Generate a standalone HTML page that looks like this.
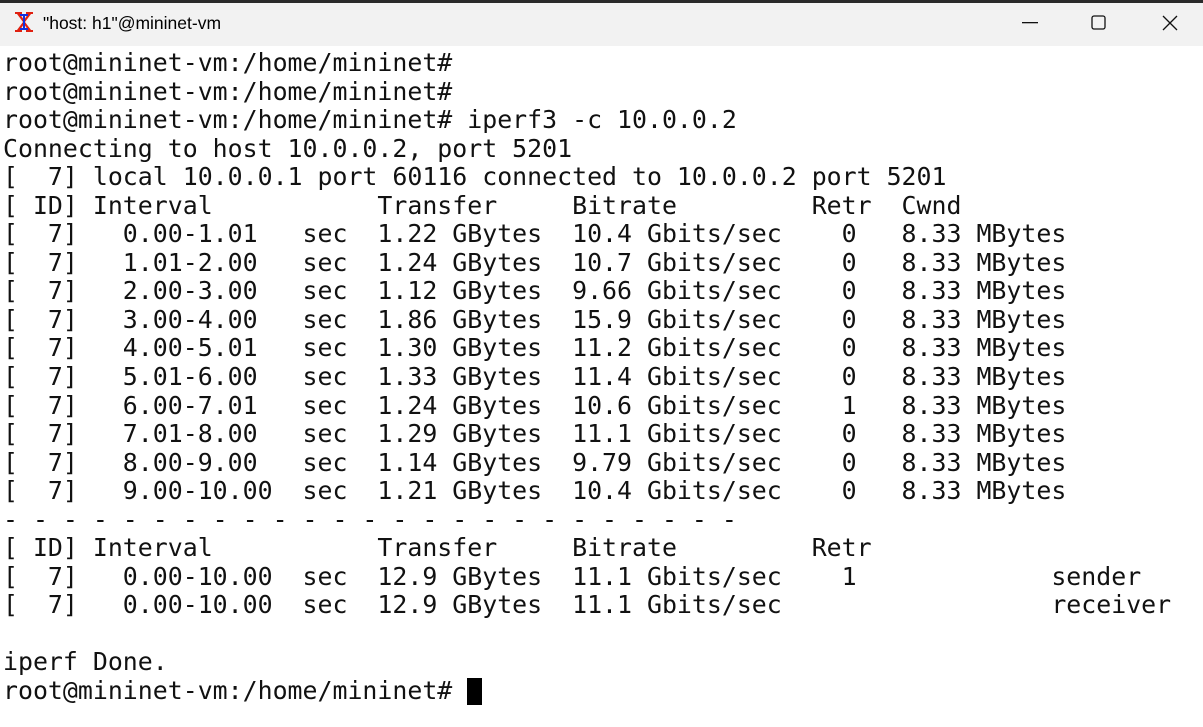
<!DOCTYPE html>
<html><head><meta charset="utf-8"><style>
html,body{margin:0;padding:0;width:1203px;height:727px;overflow:hidden;background:#fff}
.top{position:absolute;left:0;top:0;width:1203px;height:3px;background:#2a2a2a}
.tb{position:absolute;left:0;top:3px;width:1203px;height:43px;background:#f2f2f2}
.title{position:absolute;left:43px;top:10px;font:17.5px "Liberation Sans",sans-serif;color:#000}
pre{position:absolute;left:3px;top:49px;margin:0;font:24.88px/28.55px "DejaVu Sans Mono","Liberation Mono",monospace;color:#111;letter-spacing:0}
.cur{display:inline-block;width:15px;height:27px;background:#000;vertical-align:-6px}
</style></head><body>
<div class="top"></div>
<div class="tb">
<svg style="position:absolute;left:12px;top:7px" width="24" height="24" viewBox="0 0 24 24">
<path d="M3 2h7v2H8l4 6 4-6h-2V2h7v2h-2l-6 8 6 8h2v2h-7v-2h2l-4-6-4 6h2v2H3v-2h2l6-8-6-8H3z" fill="#e02010"/>
<path d="M8 4h8v2h-3v12h3v2H8v-2h3V6H8z" fill="#1030e0"/>
</svg>
<div class="title">"host: h1"@mininet-vm</div>
<svg style="position:absolute;left:1022px;top:19px" width="16" height="2"><rect width="16" height="1.3" fill="#111"/></svg>
<svg style="position:absolute;left:1091px;top:12px" width="16" height="16"><rect x="1" y="1" width="13" height="13" rx="2" fill="none" stroke="#111" stroke-width="1.3"/></svg>
<svg style="position:absolute;left:1162px;top:12px" width="16" height="16"><path d="M1 1L15 15M15 1L1 15" stroke="#111" stroke-width="1.3"/></svg>
</div>
<pre>root@mininet-vm:/home/mininet#
root@mininet-vm:/home/mininet#
root@mininet-vm:/home/mininet# iperf3 -c 10.0.0.2
Connecting to host 10.0.0.2, port 5201
[  7] local 10.0.0.1 port 60116 connected to 10.0.0.2 port 5201
[ ID] Interval           Transfer     Bitrate         Retr  Cwnd
[  7]   0.00-1.01   sec  1.22 GBytes  10.4 Gbits/sec    0   8.33 MBytes
[  7]   1.01-2.00   sec  1.24 GBytes  10.7 Gbits/sec    0   8.33 MBytes
[  7]   2.00-3.00   sec  1.12 GBytes  9.66 Gbits/sec    0   8.33 MBytes
[  7]   3.00-4.00   sec  1.86 GBytes  15.9 Gbits/sec    0   8.33 MBytes
[  7]   4.00-5.01   sec  1.30 GBytes  11.2 Gbits/sec    0   8.33 MBytes
[  7]   5.01-6.00   sec  1.33 GBytes  11.4 Gbits/sec    0   8.33 MBytes
[  7]   6.00-7.01   sec  1.24 GBytes  10.6 Gbits/sec    1   8.33 MBytes
[  7]   7.01-8.00   sec  1.29 GBytes  11.1 Gbits/sec    0   8.33 MBytes
[  7]   8.00-9.00   sec  1.14 GBytes  9.79 Gbits/sec    0   8.33 MBytes
[  7]   9.00-10.00  sec  1.21 GBytes  10.4 Gbits/sec    0   8.33 MBytes
- - - - - - - - - - - - - - - - - - - - - - - - -
[ ID] Interval           Transfer     Bitrate         Retr
[  7]   0.00-10.00  sec  12.9 GBytes  11.1 Gbits/sec    1             sender
[  7]   0.00-10.00  sec  12.9 GBytes  11.1 Gbits/sec                  receiver

iperf Done.
root@mininet-vm:/home/mininet# <span class="cur"></span></pre>
</body></html>
